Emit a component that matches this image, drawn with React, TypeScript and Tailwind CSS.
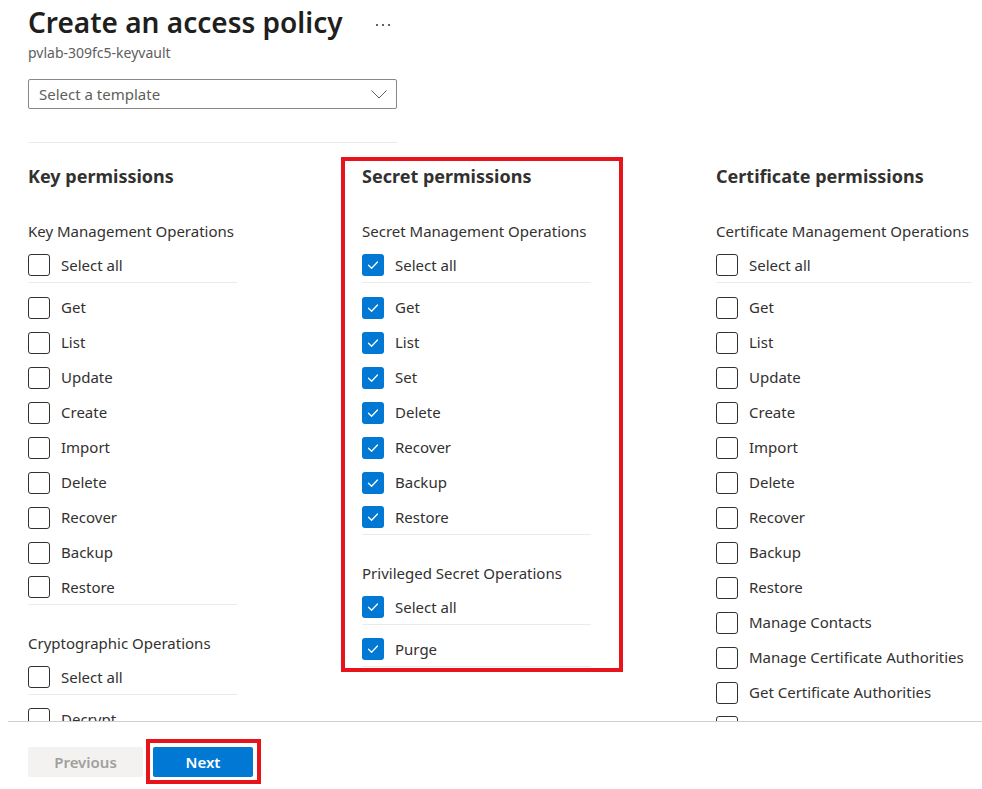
import React from "react";

type Item = { label: string; checked?: boolean };

function Checkbox({ checked }: { checked?: boolean }) {
  if (checked) {
    return (
      <span className="flex h-[22px] w-[22px] shrink-0 items-center justify-center rounded-[3px] bg-[#0078d4]">
        <svg width="14" height="14" viewBox="0 0 14 14" fill="none">
          <path d="M2.5 7.3 L5.6 10.2 L11.5 4" stroke="#fff" strokeWidth="1.3" strokeLinecap="round" strokeLinejoin="round" />
        </svg>
      </span>
    );
  }
  return <span className="h-[22px] w-[22px] shrink-0 rounded-[3px] border border-[#323130] bg-white" />;
}

function Row({ item, line }: { item: Item; line?: boolean }) {
  return (
    <div
      className={`flex h-[35px] items-center gap-[11px] whitespace-nowrap text-[15px] text-[#323130] ${
        line ? "border-b border-[#edebe9]" : ""
      }`}
    >
      <Checkbox checked={item.checked} />
      <span>{item.label}</span>
    </div>
  );
}

function Group({ title, items, checked, first }: { title: string; items: string[]; checked?: boolean; first?: boolean }) {
  return (
    <div className={first ? "mt-[31px]" : "mt-[28px]"}>
      <div className="h-[20px] whitespace-nowrap text-[15px] leading-[20px] text-[#323130]">{title}</div>
      <div className="mt-[7px]">
        <Row item={{ label: "Select all", checked }} line />
      </div>
      <div className="mt-[7px]">
        {items.map((label, i) => (
          <Row key={label} item={{ label, checked }} line={i === items.length - 1} />
        ))}
      </div>
    </div>
  );
}

function Column({ heading, width, children }: { heading: string; width: string; children: React.ReactNode }) {
  return (
    <div className={`relative shrink-0 ${width}`}>
      <h2 className="h-[28px] whitespace-nowrap text-[18px] font-bold leading-[28px] text-[#323130]">{heading}</h2>
      {children}
    </div>
  );
}

export default function App() {
  return (
    <div className="h-[789px] w-[982px] overflow-hidden bg-white pl-2 font-['Noto_Sans',sans-serif]">
      <div className="h-[721px] overflow-hidden pl-5">
        <div className="flex items-center">
          <h1 className="text-[28px] font-semibold leading-[44px] text-[#201f1e]">Create an access policy</h1>
          <div className="ml-[33px] mt-[6px] flex gap-[4px]">
            <span className="h-[2px] w-[2px] rounded-full bg-[#323130]" />
            <span className="h-[2px] w-[2px] rounded-full bg-[#323130]" />
            <span className="h-[2px] w-[2px] rounded-full bg-[#323130]" />
          </div>
        </div>
        <div className="text-[14px] leading-[18px] text-[#605e5c]">pvlab-309fc5-keyvault</div>

        <div className="mt-[17px] flex h-[30px] w-[369px] items-center justify-between rounded-[2px] border border-[#8a8886] pl-[10px] pr-[9px]">
          <span className="text-[15px] text-[#605e5c]">Select a template</span>
          <svg width="16" height="9" viewBox="0 0 16 9" fill="none">
            <path d="M0.5 0.5 L8 8 L15.5 0.5" stroke="#605e5c" strokeWidth="1" />
          </svg>
        </div>

        <div className="mt-[33px] w-[369px] border-t border-[#edebe9]" />

        <div className="mt-[19px] flex gap-[125px]">
          <Column heading="Key permissions" width="w-[209px]">
            <Group
              first
              title="Key Management Operations"
              items={["Get", "List", "Update", "Create", "Import", "Delete", "Recover", "Backup", "Restore"]}
            />
            <Group title="Cryptographic Operations" items={["Decrypt"]} />
          </Column>

          <Column heading="Secret permissions" width="w-[229px]">
            <div className="pointer-events-none absolute -top-[5px] -left-[21px] h-[515px] w-[282px] border-4 border-[#e8141c]" />
            <Group
              first
              checked
              title="Secret Management Operations"
              items={["Get", "List", "Set", "Delete", "Recover", "Backup", "Restore"]}
            />
            <Group checked title="Privileged Secret Operations" items={["Purge"]} />
          </Column>

          <Column heading="Certificate permissions" width="w-[256px]">
            <Group
              first
              title="Certificate Management Operations"
              items={[
                "Get",
                "List",
                "Update",
                "Create",
                "Import",
                "Delete",
                "Recover",
                "Backup",
                "Restore",
                "Manage Contacts",
                "Manage Certificate Authorities",
                "Get Certificate Authorities",
                "List Certificate Authorities",
              ]}
            />
          </Column>
        </div>
      </div>

      <div className="border-t border-[#d2d0ce] pl-5 pt-[25px]">
        <div className="flex gap-[10px]">
          <button
            type="button"
            disabled
            className="h-[30px] w-[115px] rounded-[2px] bg-[#f3f2f1] text-[15px] font-semibold text-[#a19f9d]"
          >
            Previous
          </button>
          <div className="relative">
            <button type="button" className="h-[30px] w-[100px] rounded-[2px] bg-[#0078d4] text-[15px] font-semibold text-white">
              Next
            </button>
            <div className="pointer-events-none absolute -top-[8px] -left-[7px] h-[45px] w-[115px] border-4 border-[#e8141c]" />
          </div>
        </div>
      </div>
    </div>
  );
}
